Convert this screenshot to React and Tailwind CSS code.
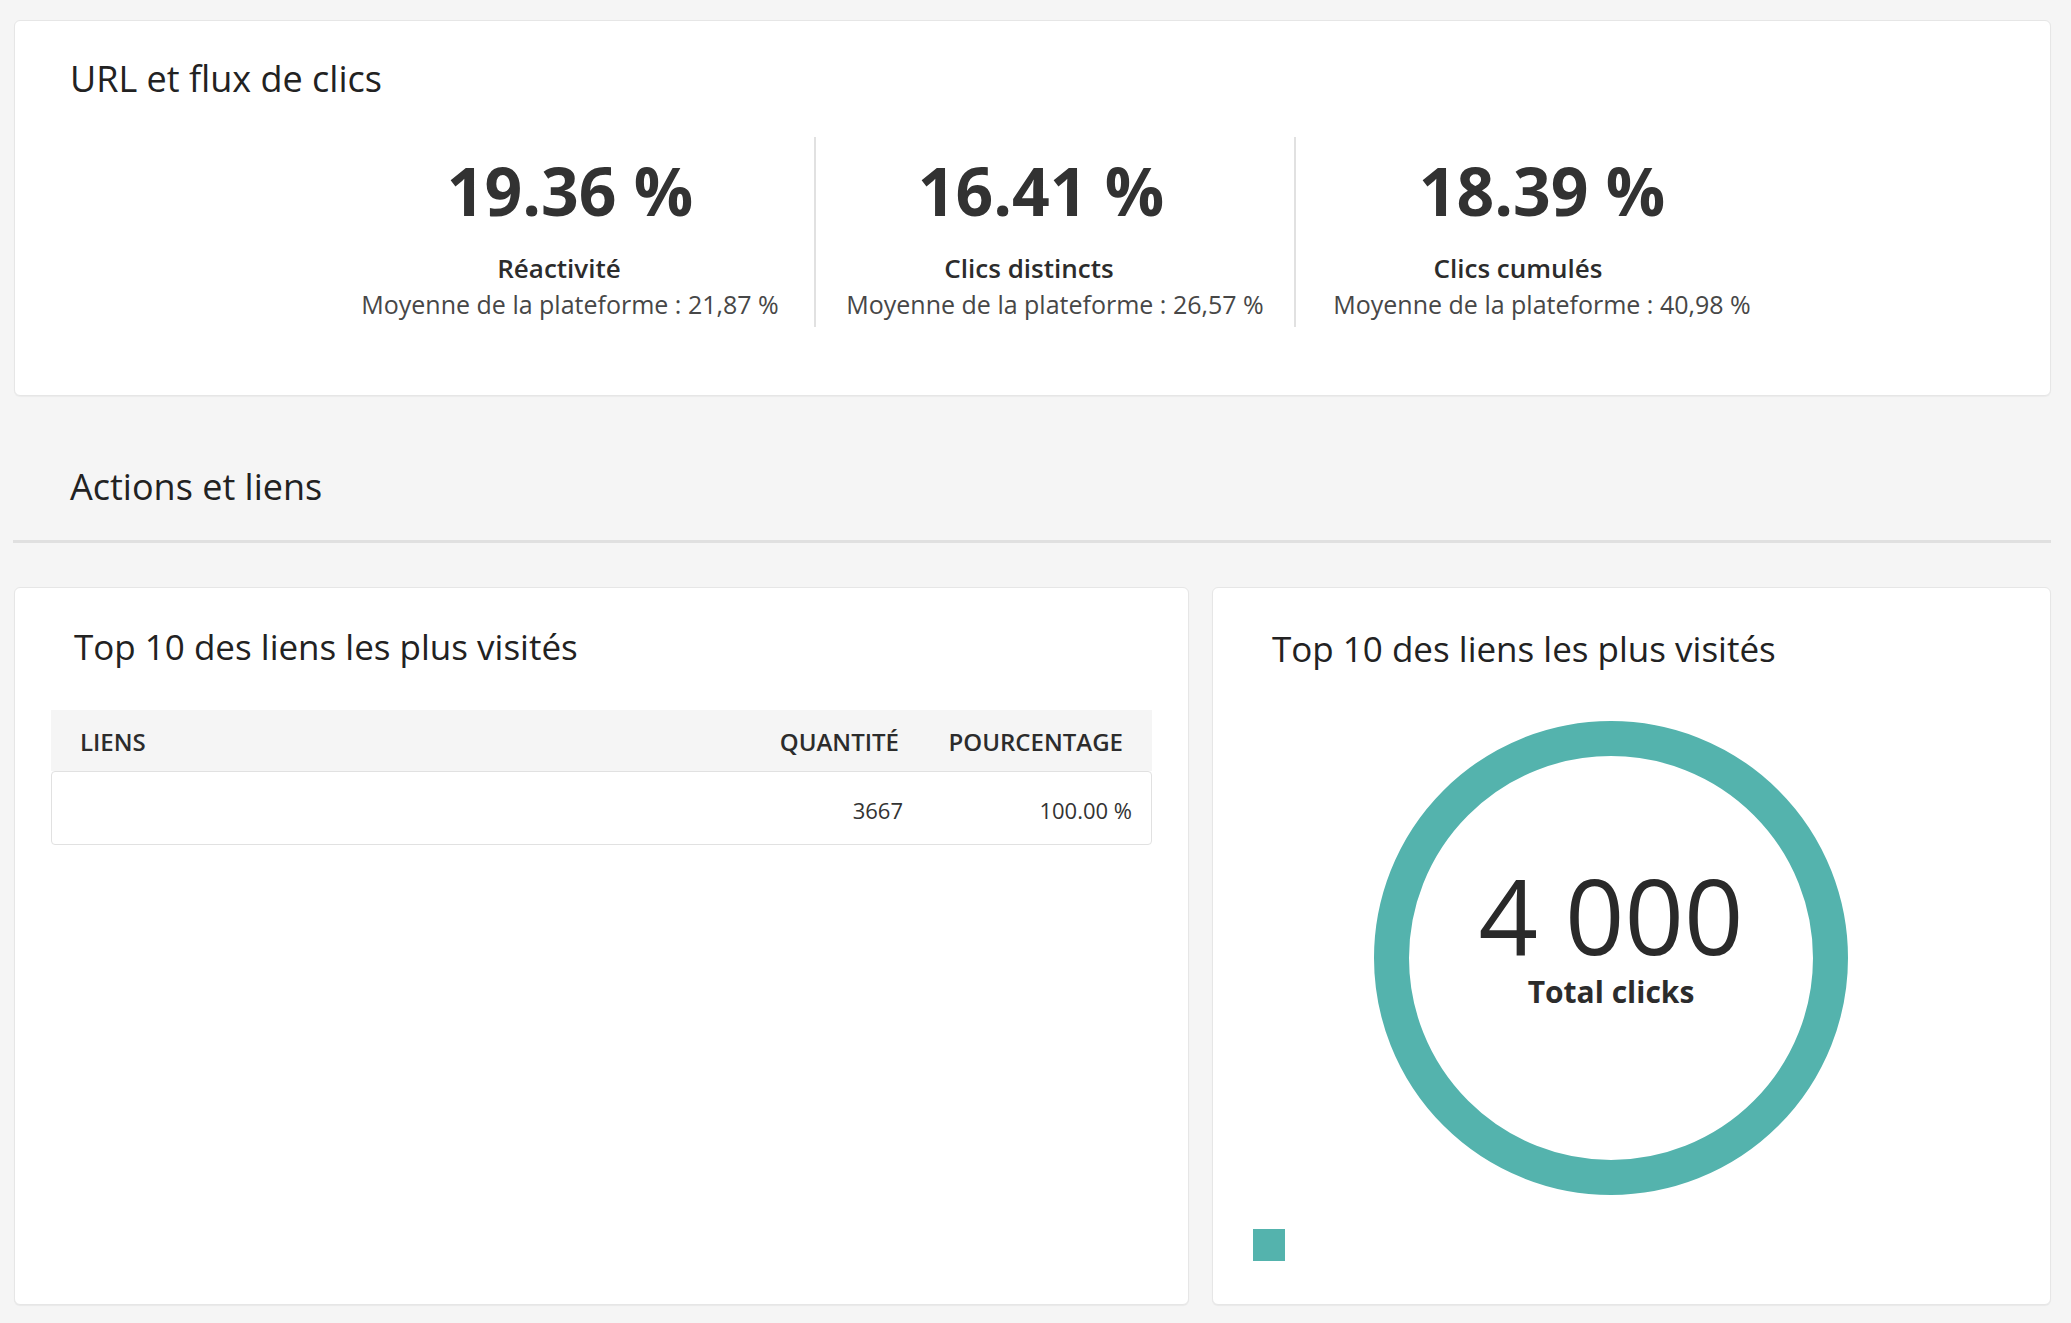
export default function App() {
  return (
    <div className="min-h-screen w-full bg-[#f5f5f5] pt-[20px] pl-[14px] pr-[20px] pb-[18px] text-[#2c2c2c] font-['Open_Sans',sans-serif]">
      {/* Card 1 */}
      <div className="bg-white border border-[#e6e6e6] rounded-[6px] shadow-[0_1px_1px_rgba(0,0,0,0.04)] pt-[34px] pb-[68px]">
        <h2 className="pl-[55px] text-[36px] leading-[48px] font-normal text-[#222222]">URL et flux de clics</h2>
        <div className="mt-[34px] flex pl-[311px]">
          <div className="w-[488px] flex flex-col items-center pt-[20px] pb-[7px]">
            <div className="text-[66px] leading-[67px] font-bold text-[#323232]">19.36 %</div>
            <div className="mt-[28px] pr-[22px] text-[26px] leading-[32px] font-semibold text-[#2c2c2c]">Réactivité</div>
            <div className="mt-[4px] text-[25px] leading-[32px] text-[#474747]">Moyenne de la plateforme : 21,87 %</div>
          </div>
          <div className="w-[480px] border-l-2 border-[#e1e1e1] flex flex-col items-center pt-[20px] pb-[7px]">
            <div className="pr-[28px] text-[66px] leading-[67px] font-bold text-[#323232]">16.41 %</div>
            <div className="mt-[28px] pr-[52px] text-[26px] leading-[32px] font-semibold text-[#2c2c2c]">Clics distincts</div>
            <div className="mt-[4px] text-[25px] leading-[32px] text-[#474747]">Moyenne de la plateforme : 26,57 %</div>
          </div>
          <div className="w-[494px] border-l-2 border-[#e1e1e1] flex flex-col items-center pt-[20px] pb-[7px]">
            <div className="text-[66px] leading-[67px] font-bold text-[#323232]">18.39 %</div>
            <div className="mt-[28px] pr-[48px] text-[26px] leading-[32px] font-semibold text-[#2c2c2c]">Clics cumulés</div>
            <div className="mt-[4px] text-[25px] leading-[32px] text-[#474747]">Moyenne de la plateforme : 40,98 %</div>
          </div>
        </div>
      </div>

      {/* Section header */}
      <div className="mt-[67px] pb-[29px] border-b-[3px] border-[#e0e0e0] -ml-[1px]">
        <h2 className="pl-[57px] text-[36px] leading-[48px] font-normal text-[#222222]">Actions et liens</h2>
      </div>

      {/* Bottom cards */}
      <div className="mt-[44px] flex gap-[23px] items-stretch">
        <div className="w-[1175px] shrink-0 bg-white border border-[#e6e6e6] rounded-[6px] shadow-[0_1px_1px_rgba(0,0,0,0.05)] pt-[35px] px-[36px]">
          <h3 className="pl-[23px] text-[35px] leading-[48px] font-normal text-[#222222]">Top 10 des liens les plus visités</h3>
          <div className="mt-[39px]">
            <div className="h-[61px] bg-[#f5f5f5] flex items-center pt-[2px] pr-[29px] text-[24px] leading-[32px] font-semibold text-[#2c2c2c]">
              <div className="flex-1 pl-[29px]">LIENS</div>
              <div className="text-right">QUANTITÉ</div>
              <div className="w-[224px] text-right">POURCENTAGE</div>
            </div>
            <div className="h-[74px] border border-[#e1e1e1] rounded-[4px] flex items-center pt-[3px] pr-[19px] text-[22px] leading-[30px] text-[#333333] bg-white">
              <div className="flex-1"></div>
              <div className="text-right">3667</div>
              <div className="w-[229px] text-right">100.00 %</div>
            </div>
          </div>
        </div>

        <div className="flex-1 bg-white border border-[#e6e6e6] rounded-[6px] shadow-[0_1px_1px_rgba(0,0,0,0.05)] pt-[37px] pb-[43px] px-[40px]">
          <h3 className="pl-[19px] text-[35px] leading-[48px] font-normal text-[#222222]">Top 10 des liens les plus visités</h3>
          <div className="mt-[48px] ml-[121px] w-[474px] h-[474px] rounded-full border-[35px] border-[#54b3ad] flex flex-col items-center pt-[111px]">
            <div className="text-[104px] leading-[96px] font-normal text-[#2a2a2a]">4 000</div>
            <div className="mt-[11px] text-[30px] leading-[36px] font-bold text-[#2c2c2c]">Total clicks</div>
          </div>
          <div className="mt-[34px] w-[32px] h-[32px] bg-[#54b3ad]"></div>
        </div>
      </div>
    </div>
  );
}
